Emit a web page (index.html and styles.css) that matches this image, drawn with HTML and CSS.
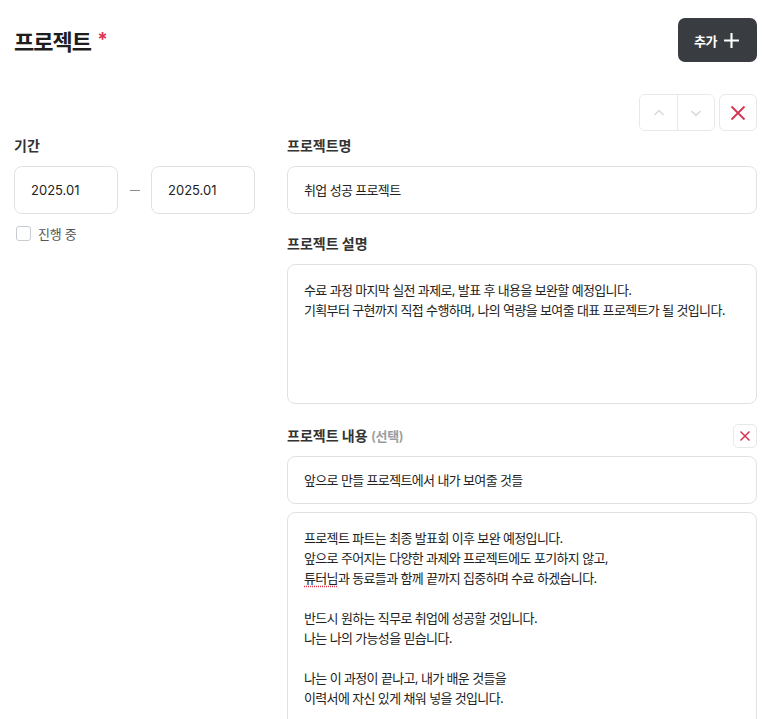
FILE: index.html
```html
<!DOCTYPE html>
<html lang="ko">
<head>
    <meta charset="UTF-8">
    <meta name="viewport" content="width=device-width, initial-scale=1.0">
    <title>프로젝트</title>
    <link rel="stylesheet" href="styles.css">
</head>
<body>
    <div class="section">
        <div class="header">
            <h2 class="title">프로젝트 <span class="required">*</span></h2>
            <button class="btn-add">추가
                <svg width="17" height="17" viewBox="0 0 16 16"><path d="M8 1v14M1 8h14" stroke="#fff" stroke-width="2"/></svg>
            </button>
        </div>

        <div class="toolbar">
            <div class="move-group">
                <button class="btn-move">
                    <svg width="14" height="14" viewBox="0 0 14 14"><path d="M2.5 9l4.5-4.5L11.5 9" fill="none" stroke="#d4d7da" stroke-width="1.3"/></svg>
                </button>
                <button class="btn-move">
                    <svg width="14" height="14" viewBox="0 0 14 14"><path d="M2.5 5l4.5 4.5L11.5 5" fill="none" stroke="#d4d7da" stroke-width="1.3"/></svg>
                </button>
            </div>
            <button class="btn-delete">
                <svg width="18" height="18" viewBox="0 0 18 18"><path d="M2.5 2.5l13 13M15.5 2.5l-13 13" stroke="#d6334f" stroke-width="1.8"/></svg>
            </button>
        </div>

        <div class="form">
            <div class="col-left">
                <div class="label">기간</div>
                <div class="period">
                    <div class="field date">2025.01</div>
                    <span class="dash"></span>
                    <div class="field date">2025.01</div>
                </div>
                <label class="check">
                    <span class="box"></span>
                    진행 중
                </label>
            </div>

            <div class="col-right">
                <div class="label">프로젝트명</div>
                <div class="field">취업 성공 프로젝트</div>

                <div class="label mt">프로젝트 설명</div>
                <div class="field area">수료 과정 마지막 실전 과제로, 발표 후 내용을 보완할 예정입니다.
기획부터 구현까지 직접 수행하며, 나의 역량을 보여줄 대표 프로젝트가 될 것입니다.</div>

                <div class="label-row">
                    <div class="label">프로젝트 내용 <span class="optional">(선택)</span></div>
                    <button class="btn-remove">
                        <svg width="12" height="12" viewBox="0 0 12 12"><path d="M1.5 1.5l9 9M10.5 1.5l-9 9" stroke="#d6334f" stroke-width="1.5"/></svg>
                    </button>
                </div>
                <div class="field">앞으로 만들 프로젝트에서 내가 보여줄 것들</div>
                <div class="field area long">프로젝트 파트는 최종 발표회 이후 보완 예정입니다.
앞으로 주어지는 다양한 과제와 프로젝트에도 포기하지 않고,
<span class="typo">튜터님</span>과 동료들과 함께 끝까지 집중하며 수료 하겠습니다.

반드시 원하는 직무로 취업에 성공할 것입니다.
나는 나의 가능성을 믿습니다.

나는 이 과정이 끝나고, 내가 배운 것들을
이력서에 자신 있게 채워 넣을 것입니다.</div>
            </div>
        </div>
    </div>
</body>
</html>
```

FILE: styles.css
```css
body {
    margin: 0;
    font-family: Inter, "Noto Sans CJK KR", sans-serif;
    color: #222;
    background: #fff;
}
button {
    font-family: inherit;
    cursor: pointer;
}
.section {
    padding: 18px 15px 0 14px;
}
.header {
    display: flex;
    justify-content: space-between;
    align-items: center;
}
.title {
    margin: 0;
    font-size: 22px;
    font-weight: 700;
    letter-spacing: -1px;
    color: #1e1e1e;
}
.required {
    color: #e0354f;
    font-size: 19px;
    position: relative;
    top: -4px;
    margin-left: 2px;
}
.btn-add {
    display: flex;
    align-items: center;
    gap: 6px;
    height: 44px;
    padding: 0 17px 0 16px;
    border: none;
    border-radius: 7px;
    background: #393c40;
    color: #fff;
    font-size: 13px;
    font-weight: 600;
    letter-spacing: -0.5px;
}
.toolbar {
    display: flex;
    justify-content: flex-end;
    gap: 4px;
    margin-top: 32px;
}
.move-group {
    display: flex;
    border: 1px solid #e6e8ea;
    border-radius: 6px;
    overflow: hidden;
}
.btn-move {
    width: 37px;
    height: 35px;
    border: none;
    background: #fff;
    display: flex;
    align-items: center;
    justify-content: center;
}
.btn-move + .btn-move {
    border-left: 1px solid #e6e8ea;
}
.btn-delete {
    width: 38px;
    height: 37px;
    border: 1px solid #e6e8ea;
    border-radius: 6px;
    background: #fff;
    display: flex;
    align-items: center;
    justify-content: center;
}
.form {
    display: grid;
    grid-template-columns: 241px 1fr;
    gap: 32px;
    margin-top: 5px;
}
.label {
    font-size: 14px;
    font-weight: 700;
    line-height: 20px;
    color: #333;
    margin-bottom: 10px;
}
.label.mt {
    margin-top: 20px;
}
.optional {
    color: #9a9ea3;
    font-size: 13px;
    font-weight: 600;
    letter-spacing: -0.3px;
}
.label-row {
    display: flex;
    justify-content: space-between;
    align-items: center;
    margin-top: 20px;
    margin-bottom: 8px;
}
.label-row .label {
    margin-bottom: 0;
}
.btn-remove {
    width: 24px;
    height: 24px;
    padding: 0;
    border: 1px solid #e6e8ea;
    border-radius: 5px;
    background: #fff;
    display: flex;
    align-items: center;
    justify-content: center;
}
.field {
    box-sizing: border-box;
    height: 48px;
    padding: 0 16px;
    border: 1px solid #dfe2e5;
    border-radius: 8px;
    font-size: 13px;
    letter-spacing: -0.65px;
    line-height: 46px;
    color: #222;
    margin-bottom: 8px;
}
.field.area {
    height: 140px;
    padding: 15px 16px;
    line-height: 20px;
    white-space: pre-line;
    margin-bottom: 20px;
}
.field.long {
    height: 240px;
}
.typo {
    text-decoration: underline dotted #e0354f;
    text-underline-offset: 3px;
}
.period {
    display: flex;
    align-items: center;
}
.field.date {
    width: 104px;
    margin-bottom: 0;
    letter-spacing: 0;
}
.dash {
    flex: 1;
    display: flex;
    justify-content: center;
}
.dash::before {
    content: "";
    width: 10px;
    height: 1px;
    background: #8a8e93;
}
.check {
    display: flex;
    align-items: center;
    gap: 7px;
    margin-top: 10px;
    margin-left: 2px;
    font-size: 13px;
    letter-spacing: -0.3px;
    color: #555;
}
.box {
    width: 13px;
    height: 13px;
    border: 1px solid #c8ccd0;
    border-radius: 3px;
}
```
